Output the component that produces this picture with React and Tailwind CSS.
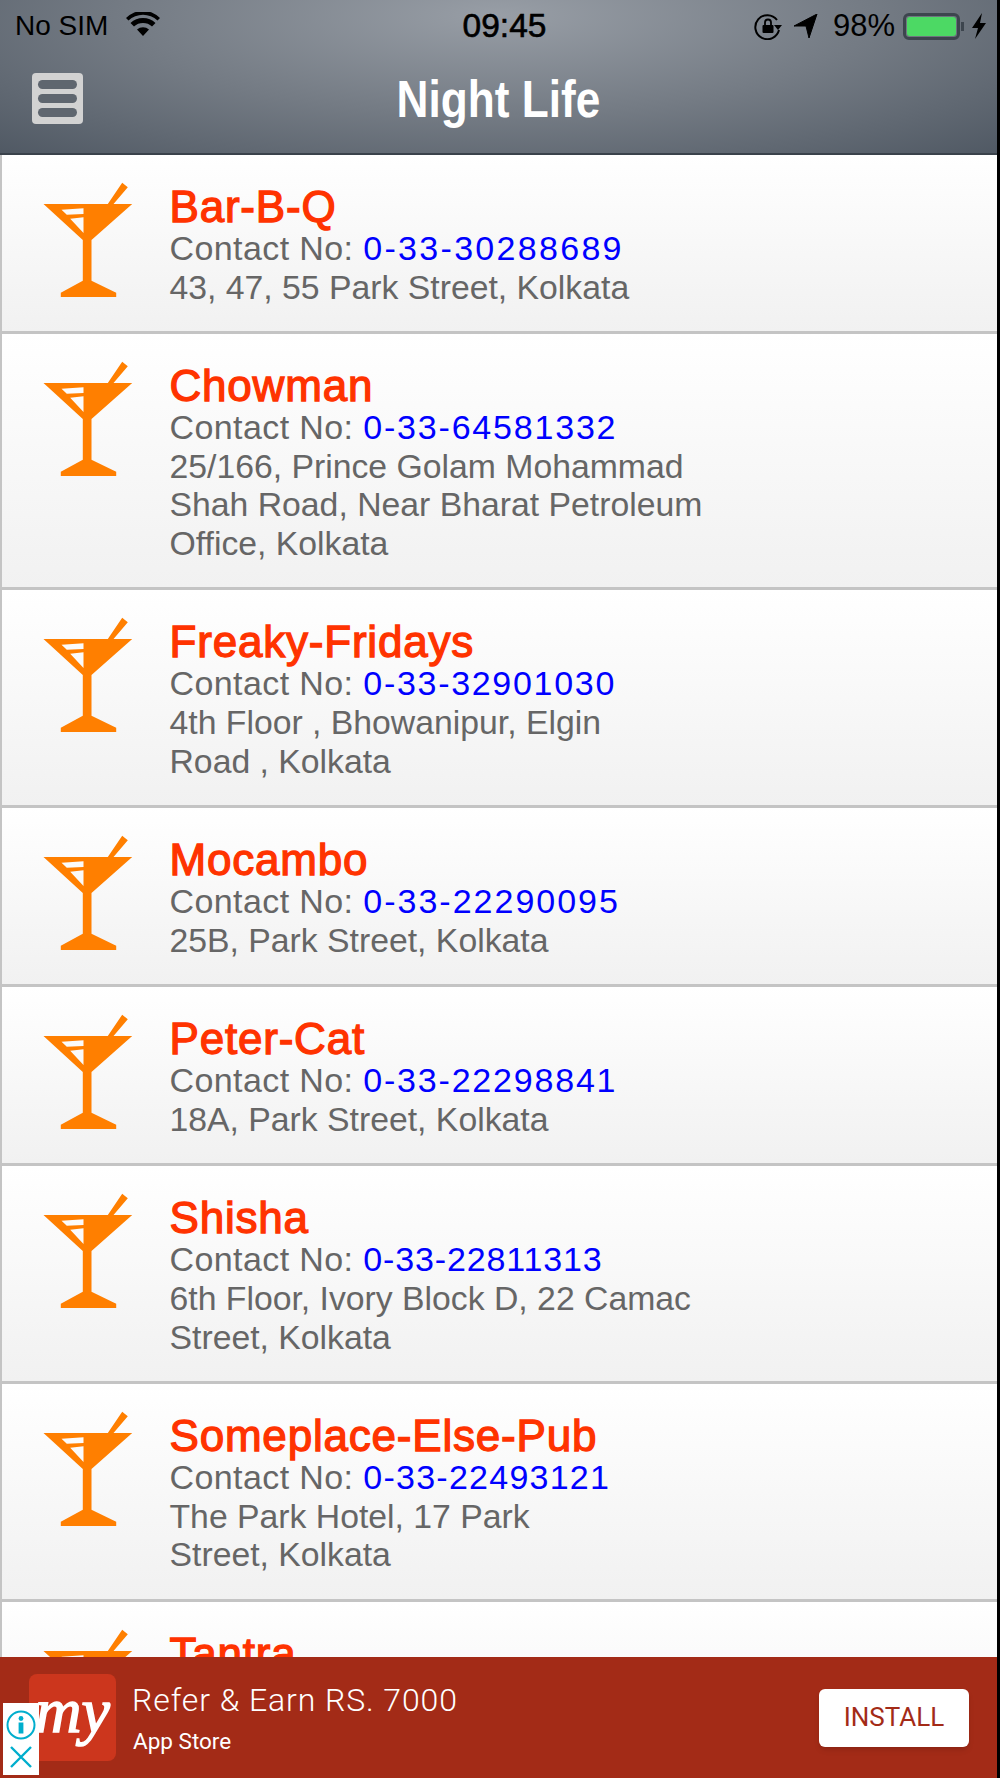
const places = [
  { name: 'Bar-B-Q', phone: '0-33-30288689', spacing: 'tracking-[2.3px]', address: ['43, 47, 55 Park Street, Kolkata'] },
  { name: 'Chowman', phone: '0-33-64581332', spacing: 'tracking-[1.8px]', address: ['25/166, Prince Golam Mohammad', 'Shah Road, Near Bharat Petroleum', 'Office, Kolkata'] },
  { name: 'Freaky-Fridays', phone: '0-33-32901030', spacing: 'tracking-[1.7px]', address: ['4th Floor , Bhowanipur, Elgin', 'Road , Kolkata'] },
  { name: 'Mocambo', phone: '0-33-22290095', spacing: 'tracking-[2px]', address: ['25B, Park Street, Kolkata'] },
  { name: 'Peter-Cat', phone: '0-33-22298841', spacing: 'tracking-[1.8px]', address: ['18A, Park Street, Kolkata'] },
  { name: 'Shisha', phone: '0-33-22811313', spacing: 'tracking-[0.85px]', address: ['6th Floor, Ivory Block D, 22 Camac', 'Street, Kolkata'] },
  { name: 'Someplace-Else-Pub', phone: '0-33-22493121', spacing: 'tracking-[1.25px]', address: ['The Park Hotel, 17 Park', 'Street, Kolkata'] },
  { name: 'Tantra', address: [] },
];

function Martini() {
  return (
    <svg viewBox="0 0 90 116" className="w-[90px] h-[116px] shrink-0 mt-[27px] ml-[40.5px]">
      <path
        fillRule="evenodd"
        fill="#ff7f00"
        d="M0.5 22 H64.8 L79.2 0.7 L84.8 5.3 L70.5 22 H89.2 L48.5 58 V98.7 L73.2 110.7 V115 H17.8 V110.7 L39.8 98.7 V58 Z M18.5 27.7 L40.5 26.3 V32 L23.8 32.7 Z M27.2 36.7 L40.5 35.3 V51 Z"
      />
    </svg>
  );
}

function Row({ place }) {
  return (
    <div className="flex shrink-0 border-l-2 border-b-[3px] border-[#c4c4c4] bg-gradient-to-b from-white to-[#f1f1f1] pb-[24.6px]">
      <Martini />
      <div className="ml-[37px] pt-[29px]">
        <div className="text-[44px] leading-[45px] tracking-[0.8px] text-[#ff3300] [-webkit-text-stroke:1.3px_#ff3300]">{place.name}</div>
        {place.phone && (
          <div className="text-[34px] leading-[38.7px] tracking-[0.4px] text-[#666666]">
            Contact No: <span className={`text-[#0000ff] ${place.spacing}`}>{place.phone}</span>
          </div>
        )}
        {place.address.map(line => (
          <div key={line} className="text-[33.75px] leading-[38.7px] text-[#666666]">{line}</div>
        ))}
      </div>
    </div>
  );
}

export default function App() {
  return (
    <div className="relative flex flex-col w-[1000px] h-[1778px] overflow-hidden bg-white border-r-[3px] border-black font-['Liberation_Sans',sans-serif]">
      {/* Header */}
      <div className="shrink-0 h-[155px] px-[15px] bg-[radial-gradient(ellipse_75%_130%_at_50%_10%,#989ea6_0%,#747b84_50%,#4d5661_100%)] border-b-2 border-[#3a424b]">
        <div className="flex items-center justify-between h-[52px] text-[28px] text-black">
          <div className="flex items-center gap-[18px]">
            <span>No SIM</span>
            <svg viewBox="0 0 34 24" className="w-[34px] h-[24px] -mt-[4px]">
              <path d="M17 24 L11 17.5 A9 9 0 0 1 23 17.5 Z M8 14.5 L4.5 11 A18 18 0 0 1 29.5 11 L26 14.5 A13.5 13.5 0 0 0 8 14.5 Z M2.5 8.5 L0 6 A24 24 0 0 1 34 6 L31.5 8.5 A21 21 0 0 0 2.5 8.5 Z" fill="#000" />
            </svg>
          </div>
          <span className="absolute left-0 right-0 pl-[12px] text-center text-[33.5px] [-webkit-text-stroke:0.6px_#000] pointer-events-none">09:45</span>
          <div className="flex items-center gap-[10px] -mr-[6px]">
            <svg viewBox="0 0 28 28" className="w-[28px] h-[28px]">
              <path d="M23 8 A12 12 0 1 0 25 18" fill="none" stroke="#000" strokeWidth="2" />
              <path d="M20 13 H28 L24 18 Z" fill="#000" />
              <rect x="8.5" y="13" width="11" height="8" rx="1" fill="#000" />
              <path d="M11 13 V10.5 A3 3 0 0 1 17 10.5 V13" fill="none" stroke="#000" strokeWidth="1.8" />
            </svg>
            <svg viewBox="0 0 24 24" className="w-[24px] h-[24px] ml-[2px]">
              <path d="M0 12 L23 0 L15 24 L12 12 Z" fill="#000" stroke="#000" strokeLinejoin="round" />
            </svg>
            <span className="ml-[5px] text-[31px]">98%</span>
            <div className="flex items-center -ml-[2px]">
              <div className="w-[57px] h-[27px] rounded-[6px] border-[3px] border-[#3d454e] p-[1px]">
                <div className="w-full h-full rounded-[3px] bg-[#4cd964]" />
              </div>
              <div className="w-[3px] h-[9px] ml-[1px] bg-[#3d454e]" />
            </div>
            <svg viewBox="0 0 16 26" className="w-[16px] h-[26px] -ml-[3px] mr-[1px]">
              <path d="M11 0 L1 15 H7 L4 26 L15 10 H9 Z" fill="#000" />
            </svg>
          </div>
        </div>
        <div className="flex items-center relative h-[93px]">
          <div className="flex flex-col justify-center gap-[4.5px] w-[51px] h-[51px] ml-[17px] px-[6px] rounded-[4px] bg-[#d2d2d2]">
            <div className="h-[9.5px] rounded-full bg-[#5f666f]" />
            <div className="h-[9.5px] rounded-full bg-[#5f666f]" />
            <div className="h-[9.5px] rounded-full bg-[#5f666f]" />
          </div>
          <div className="absolute left-0 right-0 text-center text-[52px] font-bold text-white scale-x-[0.85]">Night Life</div>
        </div>
      </div>

      {/* List */}
      <div className="flex-1 min-h-0 flex flex-col overflow-hidden">
        {places.map(p => <Row key={p.name} place={p} />)}
      </div>

      {/* Ad banner */}
      <div className="shrink-0 flex items-center h-[121px] bg-[#a32b17] pl-[29px] pr-[28px] font-['Roboto',sans-serif]">
        <div className="flex items-center justify-center w-[87px] h-[87px] rounded-[8px] bg-[#cc361d] text-white font-['Liberation_Serif',serif] italic text-[64px] leading-none pb-[14px] [-webkit-text-stroke:1.5px_#fff]">my</div>
        <div className="ml-[16px] flex-1 text-white">
          <div className="text-[32px] leading-[40px] tracking-[0.9px] font-light">Refer &amp; Earn RS. 7000</div>
          <div className="text-[22.5px] leading-[30px] mt-[6px] ml-[1px]">App Store</div>
        </div>
        <div className="flex items-center justify-center w-[150px] h-[58px] rounded-[6px] bg-white shadow-md text-[#a32b17] text-[26px]">INSTALL</div>
      </div>

      {/* AdChoices overlay */}
      <div className="absolute left-[3px] bottom-[3px] flex flex-col items-center justify-center gap-[5px] w-[36px] h-[72px] bg-white">
        <svg viewBox="0 0 30 30" className="w-[30px] h-[30px]">
          <circle cx="15" cy="15" r="13.5" fill="none" stroke="#00aecd" strokeWidth="2" />
          <circle cx="15" cy="8.5" r="2.4" fill="#00aecd" />
          <rect x="12.6" y="12.5" width="4.8" height="11" fill="#00aecd" />
        </svg>
        <svg viewBox="0 0 24 24" className="w-[24px] h-[24px]">
          <path d="M2 2 L22 22 M22 2 L2 22" stroke="#00aecd" strokeWidth="2.4" />
        </svg>
      </div>
    </div>
  );
}
